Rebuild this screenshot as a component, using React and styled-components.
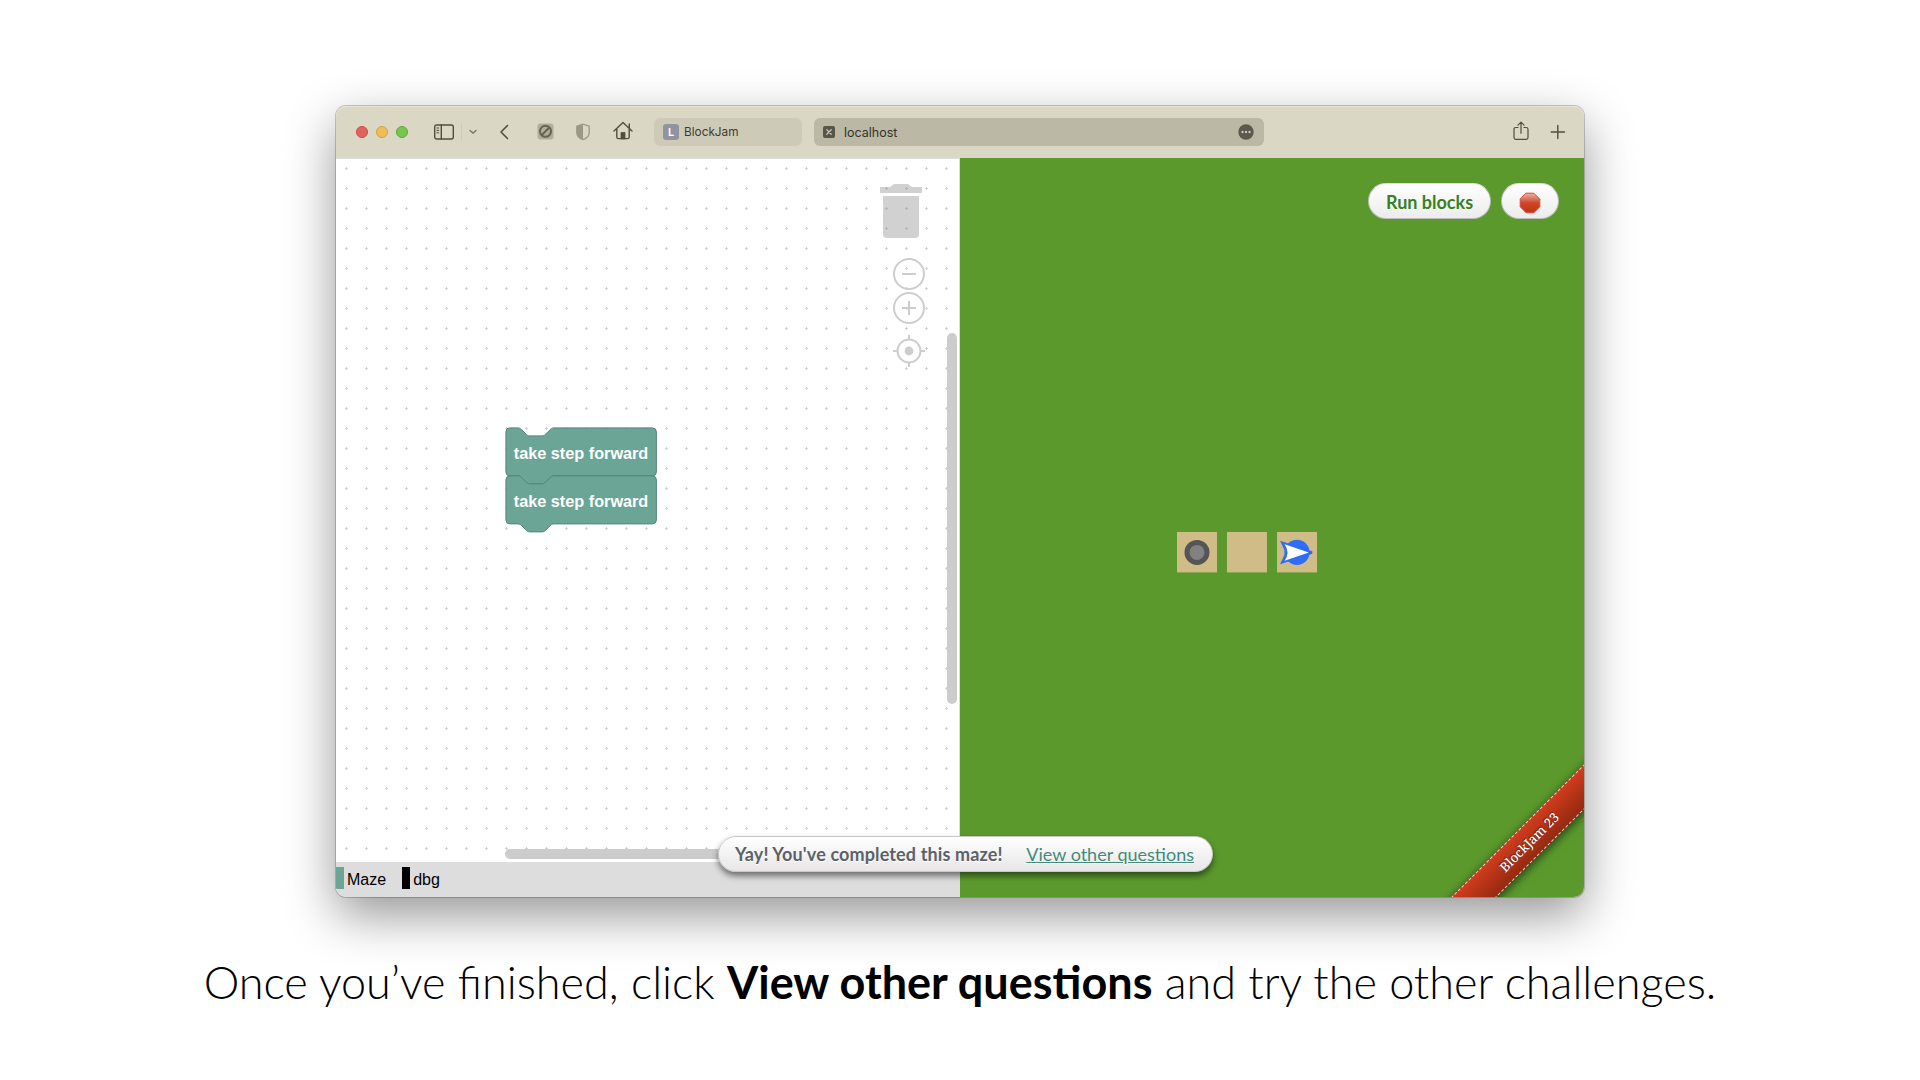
import React from "react";
import styled, { createGlobalStyle } from "styled-components";

const Global = createGlobalStyle`
  * { box-sizing: border-box; }
  body { margin: 0; background: #fff; overflow: hidden; }
`;

const Slide = styled.main`
  width: 1920px;
  height: 1080px;
  display: flex;
  flex-direction: column;
  align-items: center;
  padding-top: 106px;
  overflow: hidden;
  background: #fff;
`;

const Window = styled.section`
  position: relative;
  width: 1248px;
  height: 791px;
  flex: none;
  display: flex;
  flex-direction: column;
  border-radius: 10px;
  box-shadow: 0 0 0 1px rgba(0, 0, 0, 0.2), 0 18px 50px rgba(0, 0, 0, 0.42);
`;

const Toolbar = styled.header`
  height: 52px;
  flex: none;
  display: flex;
  align-items: center;
  padding: 0 18px 0 20px;
  background: #dad7c4;
  border-radius: 10px 10px 0 0;
  box-shadow: inset 0 1px 0 #e6e4d6;
`;

const Lights = styled.div`
  display: flex;
  gap: 8px;
  margin-right: 26px;
`;

const Light = styled.span`
  width: 12px;
  height: 12px;
  border-radius: 50%;
  background: ${(p) => p.$fill};
  border: 1px solid ${(p) => p.$edge};
`;

const Glyph = styled.svg`
  display: block;
  flex: none;
  width: ${(p) => p.$w}px;
  height: ${(p) => p.$h}px;
  margin-left: ${(p) => p.$left || 0}px;
  margin-top: ${(p) => p.$top || 0}px;
  fill: none;
  stroke: #514f3c;
  stroke-width: 1.4;
  stroke-linecap: round;
  stroke-linejoin: round;
`;

const Divider = styled.span`
  width: 1px;
  height: 18px;
  margin: 0 7px;
  background: #cfccba;
`;

const Tab = styled.div`
  display: flex;
  align-items: center;
  width: 148px;
  height: 28px;
  margin-left: 21px;
  padding-left: 9px;
  border-radius: 6px;
  background: #cdcab8;
  color: #3d3b30;
  font: 11.8px/28px Inter, Roboto, sans-serif;
`;

const Favicon = styled.span`
  width: 16px;
  height: 16px;
  margin-right: 5px;
  border-radius: 3px;
  background: #9293a0;
  color: #fff;
  text-align: center;
  font: 600 11px/17px Inter, sans-serif;
`;

const Address = styled.div`
  display: flex;
  align-items: center;
  width: 450px;
  height: 28px;
  margin-left: 12px;
  padding: 0 10px 0 9px;
  border-radius: 6px;
  background: #bbb8a5;
  color: #34332a;
  font: 12.5px/28px Inter, Roboto, sans-serif;
`;

const Host = styled.span`
  flex: 1;
  padding: 1px 0 0 9px;
`;

const Spacer = styled.span`
  flex: 1;
`;

const Panes = styled.div`
  flex: 1;
  display: flex;
  overflow: hidden;
  border-radius: 0 0 10px 10px;
  position: relative;
`;

const Editor = styled.div`
  width: 624px;
  display: flex;
  flex-direction: column;
`;

const Canvas = styled.div`
  position: relative;
  height: 704px;
  border: 1px solid #ddd;
  border-width: 1px 1px 0 0;
  background: #fff;
`;

const Drawing = styled.svg`
  display: block;
  width: 623px;
  height: 703px;
`;

const BlockLabel = styled.text`
  fill: #fff;
  font: bold 16px "Liberation Sans", Arial, sans-serif;
`;

const Categories = styled.nav`
  flex: 1;
  display: flex;
  align-items: flex-start;
  gap: 16px;
  padding-top: 5px;
  background: #ddd;
`;

const Category = styled.div`
  height: 22px;
  padding-left: 3px;
  border-left: 8px solid ${(p) => p.$color};
  color: #000;
  font: 16px/25px "Liberation Sans", Arial, sans-serif;
`;

const Game = styled.div`
  width: 624px;
  display: flex;
  flex-direction: column;
  background: #5b992d;
`;

const Controls = styled.div`
  display: flex;
  justify-content: flex-end;
  gap: 10px;
  padding: 25px 25px 0 0;
`;

const Pill = styled.button`
  display: flex;
  align-items: center;
  justify-content: center;
  width: ${(p) => p.$w}px;
  height: 36px;
  padding: 2px 0 0;
  border: 1px solid #bfbfbf;
  border-top-color: #ddd;
  border-radius: 18px;
  background: linear-gradient(#fff, #ececec);
  color: #36801f;
  font: 700 18px/34px Lato, sans-serif;
  text-shadow: 0 1px 0 #fff;
`;

const Maze = styled.div`
  display: flex;
  gap: 10px;
  padding: 313px 0 0 217px;
`;

const Tile = styled.div`
  width: 40px;
  height: 40px;
  background: #d0bc87;
  box-shadow: 0 1px 0 rgba(208, 188, 135, 0.4);
`;

const Ribbon = styled.div`
  position: absolute;
  right: -55px;
  bottom: 39px;
  width: 220px;
  height: 32px;
  transform: rotate(-45deg);
  display: flex;
  align-items: center;
  justify-content: center;
  background: linear-gradient(#d33c1e, #92290f);
  box-shadow: 0 2px 8px 1px rgba(0, 0, 0, 0.55);
  color: #fff;
  font: 500 13px/32px "Noto Serif", "DejaVu Serif", "Liberation Serif", serif;
  text-shadow: 0 -1px 1px rgba(0, 0, 0, 0.6);
  &::after {
    content: "";
    position: absolute;
    inset: 0 -10px;
    border: 1px dashed rgba(255, 255, 255, 0.75);
  }
`;

const Toast = styled.div`
  position: absolute;
  left: 382px;
  top: 730px;
  display: flex;
  align-items: center;
  justify-content: space-between;
  width: 495px;
  height: 36px;
  padding: 1px 18px 0 16px;
  border: 1px solid #c8c8c8;
  border-radius: 18px;
  background: linear-gradient(#fff, #e8e6e6);
  box-shadow: 0 4px 6px rgba(0, 0, 0, 0.5);
  color: #5d6167;
  font: 18px/35px Lato, sans-serif;
  text-shadow: 0 1px 0 #fff;
  white-space: nowrap;
`;

const ToastMessage = styled.b`
  letter-spacing: 0.13px;
`;

const ToastLink = styled.a`
  color: #3f8a78;
  text-decoration: underline;
`;

const Caption = styled.p`
  margin: 54px 0 0;
  color: #000;
  font: 300 45px/62px Lato, sans-serif;
  white-space: nowrap;
  b { font-weight: 700; }
`;

const notch = "c2,0 3,1 4,2 l4,4 c1,1 2,2 4,2 h12 c2,0 3,-1 4,-2 l4,-4 c1,-1 2,-2 4,-2";
const notchBack = "c-2,0 -3,1 -4,2 l-4,4 c-1,1 -2,2 -4,2 h-12 c-2,0 -3,-1 -4,-2 l-4,-4 c-1,-1 -2,-2 -4,-2";
const blockPath = `M0,4 a4,4 0 0,1 4,-4 h8 ${notch} h98.5 a4,4 0 0,1 4,4 v40 a4,4 0 0,1 -4,4 h-98.5 ${notchBack} h-8 a4,4 0 0,1 -4,-4z`;

function Block({ y }) {
  return (
    <g transform={`translate(169.9,${y})`}>
      <path d={blockPath} fill="#6ba596" stroke="#56847a" />
      <BlockLabel x="7.9" y="31" textLength="134.5" lengthAdjust="spacingAndGlyphs">take step forward</BlockLabel>
    </g>
  );
}

function Workspace() {
  return (
    <Drawing viewBox="0 0 623 703">
      <defs>
        <pattern id="grid" width="20" height="20" x="0" y="-1" patternUnits="userSpaceOnUse">
          <path d="M9,10.5 h3 M10.5,9 v3" stroke="#d3d3d3" strokeWidth="1" />
        </pattern>
      </defs>
      <rect width="623" height="703" fill="url(#grid)" />
      <Block y={268.9} />
      <Block y={316.9} />
      <g fill="#8b8b8b" fillOpacity="0.4">
        <path d="M544,34 v-6 h10 l4,-3 h14 l4,3 h10 v6z" />
        <path d="M547,37 h36 v38 a4,4 0 0,1 -4,4 h-28 a4,4 0 0,1 -4,-4z" />
      </g>
      <g fill="none" stroke="#cdcdcd" strokeWidth="2">
        <circle cx="573" cy="115" r="15" />
        <path d="M566,115 h14" />
        <circle cx="573" cy="149" r="15" />
        <path d="M566,149 h14 M573,142 v14" />
        <circle cx="573" cy="192" r="11.5" />
        <path d="M557,192 h4 M585,192 h4 M573,176 v4 M573,204 v4" />
      </g>
      <circle cx="573" cy="192" r="4.4" fill="#cdcdcd" />
      <rect x="611" y="174" width="10" height="371" rx="5" fill="#ccc" />
      <rect x="169" y="690" width="371" height="10" rx="5" fill="#ccc" />
    </Drawing>
  );
}

export default function App() {
  return (
    <Slide>
      <Global />
      <Window>
        <Toolbar>
          <Lights>
            <Light $fill="#e0645a" $edge="#c94d43" />
            <Light $fill="#efbd58" $edge="#d5a03f" />
            <Light $fill="#78c551" $edge="#5da83a" />
          </Lights>
          <Glyph $w={20} $h={16} $top={-1} viewBox="0 0 20 16">
            <rect x="0.7" y="1" width="18.6" height="14" rx="2" />
            <path d="M7.3,1 v14" />
            <path d="M2.8,4 h2 M2.8,6.4 h2 M2.8,8.8 h2" strokeWidth="1" />
          </Glyph>
          <Divider />
          <Glyph $w={8} $h={6} viewBox="0 0 8 6">
            <path d="M1,1.5 l3,2.6 l3,-2.6" stroke="#7b7967" />
          </Glyph>
          <Glyph $w={10} $h={16} $left={22} viewBox="0 0 10 16">
            <path d="M8.5,1.5 L2,8 l6.5,6.5" strokeWidth="1.6" />
          </Glyph>
          <Glyph $w={17} $h={17} $left={28} $top={-1} viewBox="0 0 17 17">
            <rect x="0.5" y="0.5" width="16" height="16" rx="3" fill="#b0ad9b" stroke="none" />
            <circle cx="8.5" cy="8.3" r="5.5" strokeWidth="2" stroke="#656354" />
            <path d="M5.2,11.6 l6.6,-6.6" strokeWidth="2" stroke="#656354" />
          </Glyph>
          <Glyph $w={16} $h={18} $left={21} $top={-1} viewBox="0 0 16 18">
            <path d="M8,1.2 L14.2,3.2 V9.5 C14.2,13 11.5,15.4 8,16.7 C4.5,15.4 1.8,13 1.8,9.5 V3.2z" stroke="#a09d8b" />
            <path d="M8,1.2 V16.7 C4.5,15.4 1.8,13 1.8,9.5 V3.2z" fill="#9b9886" stroke="none" />
          </Glyph>
          <Glyph $w={20} $h={19} $left={22} $top={-3} viewBox="0 0 20 19">
            <path d="M1,10 L10,1.5 L19,10 M3.8,8 V16 q0,1.6 1.6,1.6 H14.6 q1.6,0 1.6,-1.6 V8 M16.3,7 V3" />
            <path d="M8,17.5 V11.5 h4 v6z" fill="#514f3c" strokeWidth="0.8" />
          </Glyph>
          <Tab>
            <Favicon>L</Favicon>
            BlockJam
          </Tab>
          <Address>
            <Glyph $w={12} $h={12} viewBox="0 0 12 12">
              <rect width="12" height="12" rx="2" fill="#57554a" stroke="none" />
              <path d="M3.8,3.8 l4.4,4.4 M8.2,3.8 l-4.4,4.4" stroke="#c8c5b4" strokeWidth="1.3" />
            </Glyph>
            <Host>localhost</Host>
            <Glyph $w={16} $h={16} $top={-1} viewBox="0 0 16 16">
              <circle cx="8" cy="8" r="7.7" fill="#5b594d" stroke="none" />
              <g fill="#c8c5b4" stroke="none">
                <circle cx="4.5" cy="8" r="1.2" />
                <circle cx="8" cy="8" r="1.2" />
                <circle cx="11.5" cy="8" r="1.2" />
              </g>
            </Glyph>
          </Address>
          <Spacer />
          <Glyph $w={16} $h={20} $top={-2} viewBox="0 0 16 20">
            <path d="M5,6.5 H2.8 q-1.8,0 -1.8,1.8 V16.6 q0,1.8 1.8,1.8 H13.2 q1.8,0 1.8,-1.8 V8.3 q0,-1.8 -1.8,-1.8 H11 M8,12.2 V1.5 M5,4.2 L8,1.2 L11,4.2" strokeWidth="1.2" />
          </Glyph>
          <Glyph $w={16} $h={16} $left={21} $top={-1} viewBox="0 0 16 16">
            <path d="M1.2,8 h13.2 M7.8,1.4 v13.2" />
          </Glyph>
        </Toolbar>

        <Panes>
          <Editor>
            <Canvas>
              <Workspace />
            </Canvas>
            <Categories>
              <Category $color="#6ba596">Maze</Category>
              <Category $color="#000">dbg</Category>
            </Categories>
          </Editor>
          <Game>
            <Controls>
              <Pill $w={123}>Run blocks</Pill>
              <Pill $w={58}>
                <Glyph $w={22} $h={22} $left={-1} $top={1} viewBox="0 0 22 22">
                  <defs>
                    <linearGradient id="stop" x1="0" y1="0" x2="0" y2="1">
                      <stop offset="0" stopColor="#eeb5a5" />
                      <stop offset="0.5" stopColor="#cf4526" />
                      <stop offset="1" stopColor="#c23115" />
                    </linearGradient>
                  </defs>
                  <path d="M7.2,1.2 H14.8 L20.8,7.2 V14.8 L14.8,20.8 H7.2 L1.2,14.8 V7.2z" fill="url(#stop)" stroke="#d34a3a" strokeWidth="1" />
                </Glyph>
              </Pill>
            </Controls>
            <Maze>
              <Tile>
                <Glyph $w={40} $h={40} viewBox="0 0 40 40">
                  <circle cx="20" cy="20.4" r="10" fill="#818181" stroke="#555" strokeWidth="5" />
                </Glyph>
              </Tile>
              <Tile />
              <Tile>
                <Glyph $w={40} $h={40} viewBox="0 0 40 40">
                  <circle cx="20" cy="20.4" r="12.6" fill="#2f6df6" stroke="none" />
                  <path d="M3,8.7 L35.3,19.2 V21.8 L3,32.3 L8.6,20.5z" fill="#2f6df6" stroke="none" />
                  <path d="M7.6,12.2 L31.8,20.5 L7.6,28.8 Q13.4,20.5 7.6,12.2z" fill="#fff" stroke="none" />
                </Glyph>
              </Tile>
            </Maze>
          </Game>
          <Ribbon>BlockJam 23</Ribbon>
        </Panes>

        <Toast>
          <ToastMessage>Yay! You've completed this maze!</ToastMessage>
          <ToastLink>View other questions</ToastLink>
        </Toast>
      </Window>
      <Caption>
        Once you’ve finished, click <b>View other questions</b> and try the other challenges.
      </Caption>
    </Slide>
  );
}
